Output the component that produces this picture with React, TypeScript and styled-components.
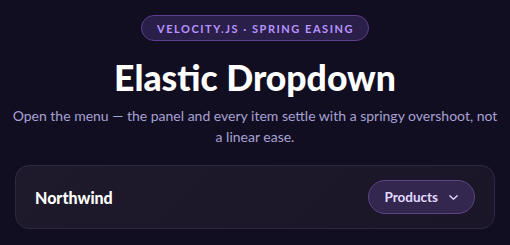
import React from "react";
import styled, { createGlobalStyle } from "styled-components";

const Global = createGlobalStyle`
  html, body { margin: 0; padding: 0; background: #120e22; }
  body { font-family: Lato, "Segoe UI", "Noto Sans", sans-serif; -webkit-font-smoothing: antialiased; }
  * { box-sizing: border-box; }
`;

const Page = styled.main`
  min-height: 245px;
  padding: 15px 10px 0;
  display: flex;
  flex-direction: column;
  align-items: center;
  background: #120e22;
`;

const Badge = styled.div`
  height: 26px;
  padding: 0 14px 0 15px;
  display: flex;
  align-items: center;
  border-radius: 999px;
  background: #2a1f48;
  border: 1px solid #5a3f8f;
  color: #b794ff;
  font-size: 11px;
  font-weight: 700;
  letter-spacing: 0.14em;
  text-transform: uppercase;
`;

const Title = styled.h1`
  margin: 17px 0 0;
  color: #ffffff;
  font-size: 35.5px;
  font-weight: 900;
  line-height: 40px;
`;

const Subtitle = styled.p`
  margin: 7px 0 0;
  max-width: 490px;
  text-align: center;
  color: #a7a1d2;
  font-size: 14px;
  line-height: 21px;
`;

const Card = styled.section`
  align-self: stretch;
  margin: 18px 5px 0;
  height: 64px;
  padding: 0 19px 0 19px;
  display: flex;
  align-items: center;
  justify-content: space-between;
  border-radius: 14px;
  background: linear-gradient(135deg, #1e1a2c, #1a1627);
  border: 1px solid #2e2940;
`;

const Brand = styled.span`
  color: #ffffff;
  font-size: 16px;
  font-weight: 900;
`;

const MenuButton = styled.button`
  height: 34px;
  padding: 0 15px 0 15px;
  display: flex;
  align-items: center;
  gap: 10px;
  border-radius: 999px;
  background: #33264f;
  border: 1px solid #5c4587;
  color: #e2dcff;
  font-family: inherit;
  font-size: 13.5px;
  font-weight: 700;
  cursor: pointer;
`;

const Chevron = () => (
  <svg width="11" height="11" viewBox="0 0 12 12" fill="none">
    <path d="M2 4.2 L6 7.8 L10 4.2" stroke="#e2dcff" strokeWidth="1.5" strokeLinecap="round" strokeLinejoin="round" />
  </svg>
);

export default function App() {
  return (
    <>
      <Global />
      <Page>
        <Badge>Velocity.js · Spring easing</Badge>
        <Title>Elastic Dropdown</Title>
        <Subtitle>
          Open the menu — the panel and every item settle with a springy overshoot, not a linear ease.
        </Subtitle>
        <Card>
          <Brand>Northwind</Brand>
          <MenuButton>
            Products
            <Chevron />
          </MenuButton>
        </Card>
      </Page>
    </>
  );
}
